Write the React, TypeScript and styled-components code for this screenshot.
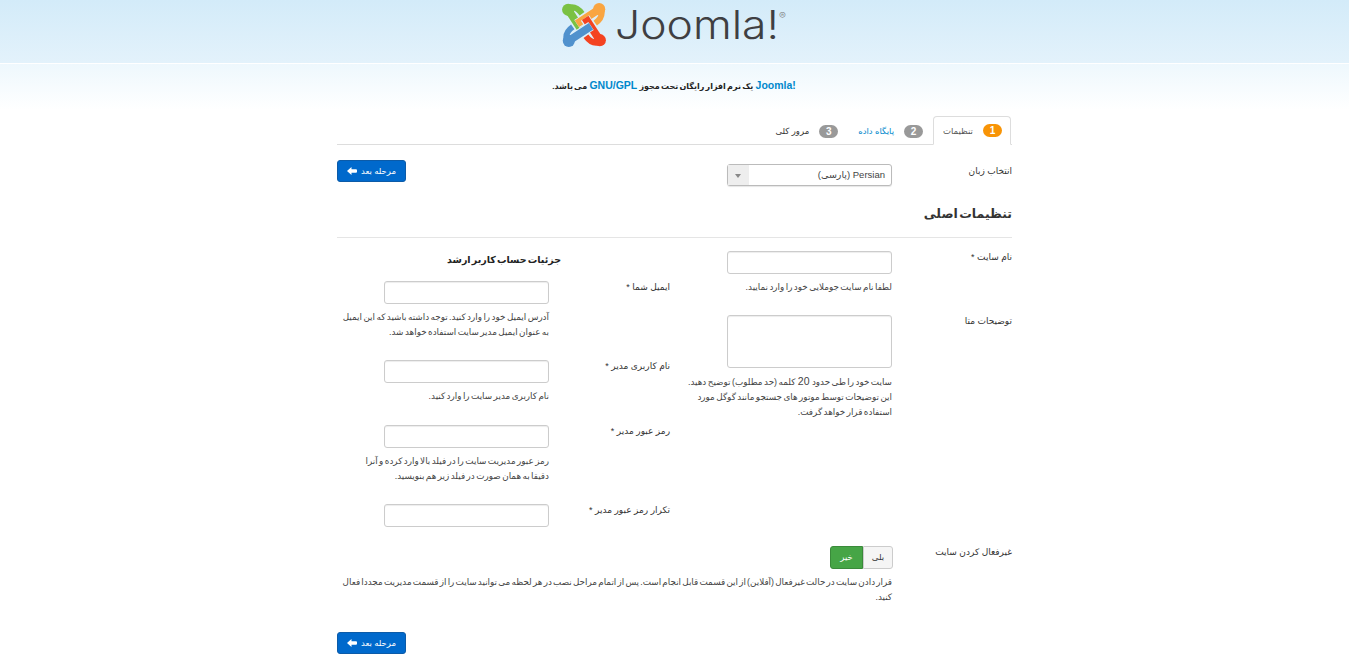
import React from 'react'
import styled, { createGlobalStyle } from 'styled-components'

const GlobalStyle = createGlobalStyle`
    html, body {
        margin: 0;
        background: #fff;
        font-family: "Liberation Sans", "DejaVu Sans", sans-serif;
        font-size: 10px;
        line-height: 16px;
        color: #333;
    }
`

function JoomlaMark() {
    const pieces = [
        { color: '#7ac143', angle: 0 },
        { color: '#f9a541', angle: 90 },
        { color: '#f44321', angle: 180 },
        { color: '#5091cd', angle: 270 },
    ]
    return (
        <svg width="46" height="46" viewBox="0 0 46 47">
            {pieces.map((p) => (
                <g key={p.color} transform={`rotate(${p.angle} 23 23.5)`}>
                    <path d="M10 12.5 L22 30.7" fill="none" stroke="#e0f0fa" strokeWidth="10" />
                    <path d="M7 8 L21.8 30.7" fill="none" stroke={p.color} strokeWidth="8" />
                    <path d="M7 6 Q15 3.5 21 12" fill="none" stroke={p.color} strokeWidth="6" />
                    <circle cx="6.8" cy="8" r="6.2" fill={p.color} />
                </g>
            ))}
        </svg>
    )
}

function Field({ label, required, children }: { label: string; required?: boolean; children: React.ReactNode }) {
    return (
        <FieldRow>
            <FieldLabel>
                {label}
                {required && ' *'}
            </FieldLabel>
            <FieldControl>{children}</FieldControl>
        </FieldRow>
    )
}

function NextButton() {
    return (
        <PrimaryButton>
            مرحله بعد
            <svg width="10" height="8" viewBox="0 0 10 8">
                <path d="M0 4 L4.5 0 V2.2 H9 Q10 2.2 10 3.2 V4.8 Q10 5.8 9 5.8 H4.5 V8 Z" fill="#fff" />
            </svg>
        </PrimaryButton>
    )
}

export default function App() {
    return (
        <>
            <GlobalStyle />
            <Header>
                <Logo>
                    <JoomlaMark />
                    <Wordmark>
                        Joomla!<sup>®</sup>
                    </Wordmark>
                </Logo>
            </Header>
            <Message>
                <MessageText>
                    <MessageLink>Joomla!</MessageLink> یک نرم افزار رایگان تحت مجوز <MessageLink>GNU/GPL</MessageLink> می باشد.
                </MessageText>
            </Message>
            <Container>
                <Tabs>
                    <Tab $active>
                        <Badge $orange>1</Badge>
                        تنظیمات
                    </Tab>
                    <Tab $link>
                        <Badge>2</Badge>
                        پایگاه داده
                    </Tab>
                    <Tab>
                        <Badge>3</Badge>
                        مرور کلی
                    </Tab>
                </Tabs>

                <LanguageRow>
                    <FieldLabel>انتخاب زبان</FieldLabel>
                    <Select>
                        <SelectValue>Persian (پارسی)</SelectValue>
                        <SelectArrow />
                    </Select>
                    <PushLeft>
                        <NextButton />
                    </PushLeft>
                </LanguageRow>

                <Heading>تنظیمات اصلی</Heading>

                <Columns>
                    <RightColumn>
                        <Field label="نام سایت" required>
                            <TextInput />
                            <Help>لطفا نام سایت جوملایی خود را وارد نمایید.</Help>
                        </Field>
                        <Field label="توضیحات متا">
                            <TextArea />
                            <Help>
                                سایت خود را طی حدود <Latin>20</Latin> کلمه (حد مطلوب) توضیح دهید.
                                <br />
                                این توضیحات توسط موتور های جستجو مانند گوگل مورد
                                <br />
                                استفاده قرار خواهد گرفت.
                            </Help>
                        </Field>
                    </RightColumn>
                    <LeftColumn>
                        <SubHeading>جزئیات حساب کاربر ارشد</SubHeading>
                        <Field label="ایمیل شما" required>
                            <TextInput />
                            <Help>آدرس ایمیل خود را وارد کنید. توجه داشته باشید که این ایمیل به عنوان ایمیل مدیر سایت استفاده خواهد شد.</Help>
                        </Field>
                        <Field label="نام کاربری مدیر" required>
                            <TextInput />
                            <Help>نام کاربری مدیر سایت را وارد کنید.</Help>
                        </Field>
                        <Field label="رمز عبور مدیر" required>
                            <TextInput />
                            <Help>
                                رمز عبور مدیریت سایت را در فیلد بالا وارد کرده و آنرا
                                <br />
                                دقیقا به همان صورت در فیلد زیر هم بنویسید.
                            </Help>
                        </Field>
                        <Field label="تکرار رمز عبور مدیر" required>
                            <TextInput />
                        </Field>
                    </LeftColumn>
                </Columns>

                <OfflineRow>
                    <FieldLabel>غیرفعال کردن سایت</FieldLabel>
                    <OfflineControl>
                        <Toggle>
                            <ToggleOption>بلی</ToggleOption>
                            <ToggleOption $on>خیر</ToggleOption>
                        </Toggle>
                        <Help>
                            قرار دادن سایت در حالت غیرفعال (آفلاین) از این قسمت قابل انجام است. پس از اتمام مراحل نصب در هر لحظه می توانید سایت را از قسمت مدیریت مجددا فعال
                            کنید.
                        </Help>
                    </OfflineControl>
                </OfflineRow>

                <Footer>
                    <NextButton />
                </Footer>
            </Container>
        </>
    )
}

const Header = styled.header`
    height: 63px;
    background: linear-gradient(#d3ebf9, #e3f2fb);
    border-bottom: 1px solid #fff;
    overflow: hidden;
`

const Logo = styled.div`
    display: flex;
    justify-content: center;
    align-items: flex-start;
    gap: 8px;
    padding-top: 2px;
`

const Wordmark = styled.div`
    font-family: "Inter", sans-serif;
    font-weight: 300;
    font-size: 39px;
    line-height: 46px;
    color: #3f3f42;
    margin-right: 24px;
    transform: scaleX(1.14);
    transform-origin: left center;

    sup {
        font-size: 9px;
        line-height: 9px;
        vertical-align: 20px;
        color: #777;
    }
`

const Message = styled.div`
    height: 46px;
    background: linear-gradient(#eef8fd, #fff);
    display: flex;
    justify-content: center;
    padding-top: 13px;
    box-sizing: border-box;
`

const MessageText = styled.p`
    direction: rtl;
    margin: 0;
    font-weight: bold;
    font-size: 8px;
    word-spacing: -1px;
    color: #222;
`

const MessageLink = styled.span`
    direction: ltr;
    unicode-bidi: isolate;
    color: #0088cc;
    font-size: 10.5px;
    margin: 0 1px;
`

const Latin = styled.span`
    display: inline-block;
    font-size: 10.5px;
    margin: 0 1px;
`

const Container = styled.main`
    width: 675px;
    margin: 0 auto;
    direction: rtl;
    padding-top: 6px;
`

const Tabs = styled.nav`
    display: flex;
    height: 28px;
    border-bottom: 1px solid #ddd;
    padding-right: 1px;
`

const Tab = styled.div<{ $active?: boolean; $link?: boolean }>`
    height: 29px;
    box-sizing: border-box;
    display: flex;
    align-items: center;
    gap: 10px;
    padding: 0 ${(p) => (p.$active ? '8px' : '9px')} 0 9px;
    background: ${(p) => (p.$active ? '#fff' : 'transparent')};
    border: 1px solid ${(p) => (p.$active ? '#ddd' : 'transparent')};
    border-bottom: ${(p) => (p.$active ? '1px solid #fff' : '0')};
    border-radius: 4px 4px 0 0;
    font-size: 8.5px;
    color: ${(p) => (p.$active ? '#555' : p.$link ? '#0088cc' : '#333')};
`

const Badge = styled.span<{ $orange?: boolean }>`
    width: 19px;
    height: 13px;
    box-sizing: border-box;
    display: inline-flex;
    align-items: center;
    justify-content: center;
    border-radius: 9px;
    background: ${(p) => (p.$orange ? '#f89406' : '#999')};
    color: #fff;
    font-weight: bold;
    font-size: 10px;
    line-height: 13px;
`

const FieldRow = styled.div`
    display: flex;
    align-items: flex-start;
    margin-bottom: 20px;
`

const FieldLabel = styled.label`
    flex: 0 0 120px;
    font-size: 9px;
    line-height: 12px;
`

const FieldControl = styled.div`
    flex: 1;
    display: flex;
    flex-direction: column;
    align-items: flex-start;
`

const LanguageRow = styled.div`
    display: flex;
    align-items: flex-start;
    padding-top: 15px;

    > label {
        margin-top: 5px;
    }
`

const PushLeft = styled.div`
    margin-right: auto;
`

const Select = styled.div`
    margin-top: 4px;
    width: 165px;
    height: 22px;
    box-sizing: border-box;
    display: flex;
    border: 1px solid #bbb;
    border-radius: 3px;
    background: #fff;
    box-shadow: 0 1px 1px rgba(0, 0, 0, 0.1);
`

const SelectValue = styled.div`
    flex: 1;
    padding: 0 6px;
    font-size: 9.5px;
    line-height: 20px;
    color: #444;
`

const SelectArrow = styled.div`
    width: 21px;
    background: #eee;
    position: relative;

    &::after {
        content: '';
        position: absolute;
        top: 9px;
        left: 7px;
        border: 3px solid transparent;
        border-top: 4px solid #888;
    }
`

const PrimaryButton = styled.button`
    direction: rtl;
    width: 69px;
    height: 22px;
    display: flex;
    align-items: center;
    justify-content: center;
    gap: 4px;
    padding: 0;
    background: #0069cc;
    border: 1px solid #0c5ba8;
    border-radius: 3px;
    color: #fff;
    font-family: inherit;
    font-size: 8.5px;
    font-weight: normal;
`

const Heading = styled.h3`
    margin: 18px 0 0;
    height: 33px;
    border-bottom: 1px solid #e5e5e5;
    font-size: 12.5px;
    word-spacing: -2px;
    line-height: 20px;
    font-weight: bold;
    color: #333;
`

const Columns = styled.div`
    display: flex;
    justify-content: space-between;
    align-items: flex-start;
`

const Help = styled.p`
    margin: 6px 0 0;
    min-height: 16px;
    font-size: 8.8px;
    word-spacing: -1px;
    line-height: 15px;
    color: #444;
`

const RightColumn = styled.section`
    width: 325px;
    padding-top: 13px;

    ${Help} {
        min-height: 0;
    }
`

const LeftColumn = styled.section`
    width: 333px;
    padding-top: 14px;

    ${FieldLabel} {
        flex-basis: 121px;
    }
`

const SubHeading = styled.h4`
    margin: 0 109px 13px 0;
    font-size: 9.5px;
    word-spacing: -1.5px;
    line-height: 16px;
    font-weight: bold;
    color: #222;
`

const TextInput = styled.input`
    width: 165px;
    height: 23px;
    box-sizing: border-box;
    border: 1px solid #ccc;
    border-radius: 3px;
    background: #fff;
    box-shadow: inset 0 1px 1px rgba(0, 0, 0, 0.075);
    padding: 0;
    margin: 0;
`

const TextArea = styled.textarea`
    display: block;
    width: 165px;
    height: 53px;
    box-sizing: border-box;
    border: 1px solid #ccc;
    border-radius: 3px;
    background: #fff;
    box-shadow: inset 0 1px 1px rgba(0, 0, 0, 0.075);
    padding: 0;
    margin: 0;
    resize: none;
`

const OfflineRow = styled.div`
    display: flex;
    align-items: flex-start;
    margin-top: -1px;
`

const OfflineControl = styled.div`
    flex: 1;
    display: flex;
    flex-direction: column;
    align-items: flex-start;

    ${Help} {
        word-spacing: -1.25px;
    }
`

const Toggle = styled.div`
    display: flex;
    height: 23px;
    margin-right: -1px;
`

const ToggleOption = styled.div<{ $on?: boolean }>`
    width: ${(p) => (p.$on ? '33px' : '30px')};
    box-sizing: border-box;
    text-align: center;
    font-size: 8.5px;
    line-height: 21px;
    background: ${(p) => (p.$on ? '#46a546' : '#f5f5f5')};
    color: ${(p) => (p.$on ? '#fff' : '#333')};
    border: 1px solid ${(p) => (p.$on ? '#3a8a3a' : '#ccc')};
    border-radius: ${(p) => (p.$on ? '3px 0 0 3px' : '0 3px 3px 0')};
`

const Footer = styled.div`
    margin-top: 27px;
    display: flex;
    justify-content: flex-end;
`
